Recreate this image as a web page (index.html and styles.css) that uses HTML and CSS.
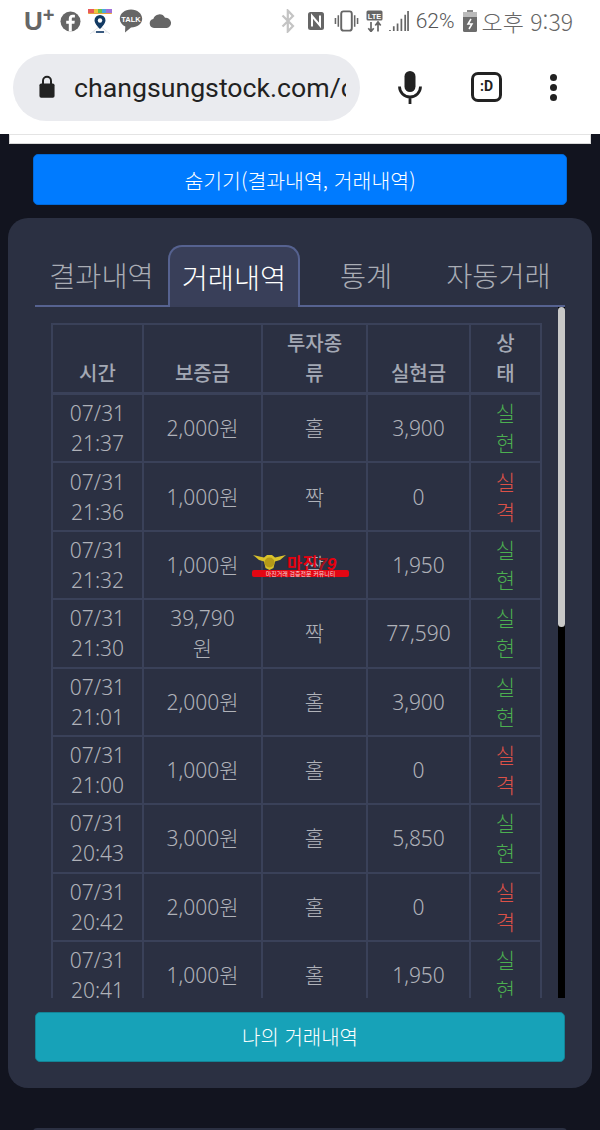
FILE: index.html
```html
<!DOCTYPE html>
<html lang="ko">
<head>
<meta charset="utf-8">
<title>거래내역</title>
<link rel="stylesheet" href="styles.css">
</head>
<body>
<div class="chrome">
  <div class="status">
    <div class="status-left">
      <span class="uplus">U<sup>+</sup></span>
      <svg class="ic" width="21" height="21" viewBox="0 0 21 21"><circle cx="10.5" cy="10.5" r="10" fill="#666"/><path d="M11.8 20.5v-7.7h2.6l.4-3h-3V8c0-.9.3-1.400 1.500-1.400h1.600V3.900c-.3 0-1.200-.1-2.300-.1-2.300 0-3.800 1.400-3.800 3.900v2.100H6.200v3h2.600v7.700z" fill="#fff"/></svg>
      <svg class="ic" width="26" height="26" viewBox="0 0 26 26"><path d="M3 26 13 18l10 8M6 24h14" fill="none" stroke="#dfe3e8" stroke-width="1"/><path d="M1 6 Q2 1 6 1H20Q24 1 25 6Z" fill="#e8a33c"/><rect x="1" y="1" width="6" height="4" fill="#e85a5a"/><rect x="7" y="1" width="4" height="4" fill="#f0c63c"/><rect x="11" y="1" width="4" height="4" fill="#6cc24a"/><rect x="15" y="1" width="4" height="4" fill="#4aa8e0"/><rect x="19" y="1" width="6" height="4" fill="#a070d8"/><path d="M13 7a5.500 5.500 0 0 0-5.500 5.500C7.500 16 13 21 13 21s5.500-5 5.500-8.500A5.500 5.500 0 0 0 13 7z" fill="#123a63"/><circle cx="13" cy="12.500" r="2.200" fill="#fff"/><rect x="9" y="23" width="8" height="2" fill="#3a5a80"/></svg>
      <svg class="ic" width="24" height="24" viewBox="0 0 24 24"><path d="M12 .5C5.700.5.800 4.500.800 9.800c0 3.400 2.200 6.200 5.500 7.800L6 23.500l6-5c6.300 0 11.200-3.600 11.200-8.700S18.300.5 12 .5z" fill="#666"/><text x="12" y="12.500" class="talk">TALK</text></svg>
      <svg class="ic" width="23" height="14" viewBox="0 0 23 14"><path d="M5 14a4.500 4.500 0 0 1-.7-8.900A6.300 6.300 0 0 1 16 3.800 5.200 5.200 0 0 1 18 14z" fill="#666"/></svg>
    </div>
    <div class="status-right">
      <svg class="ic bt" width="14" height="24" viewBox="0 0 14 24"><path d="M1.500 6.500 12 17l-5.200 5.500V1.500L12 7 1.500 17.500" fill="none" stroke="#c4c4c4" stroke-width="2.200"/></svg>
      <svg class="ic nfc" width="18" height="20" viewBox="0 0 18 20"><rect x="1" y="1" width="16" height="18" rx="2.500" fill="#666"/><path d="M5 15.500V5l8 9.500V4.500" fill="none" stroke="#fff" stroke-width="2"/></svg>
      <svg class="ic" width="25" height="22" viewBox="0 0 26 22"><rect x="7.500" y="1" width="11" height="20" rx="2.500" fill="none" stroke="#666" stroke-width="2"/><path d="M4.500 5v12M1.500 8v6M21.500 5v12M24.500 8v6" stroke="#666" stroke-width="1.600"/></svg>
      <svg class="ic" width="17" height="22" viewBox="0 0 17 22"><rect x=".5" y=".5" width="16" height="10" rx="1.500" fill="#666"/><text x="8.500" y="8.500" class="lte">LTE</text><path d="M5 12v9M2.300 18.300 5 21.500l2.700-3.200M12 21.500v-9M9.300 15.500 12 12l2.700 3.500" fill="none" stroke="#666" stroke-width="1.700"/></svg>
      <svg class="ic signal" width="20" height="21" viewBox="0 0 21 22"><path d="M1 21v-1M5 21v-5M9 21v-8M13 21V8M17 21V4M20 21V0" stroke="#666" stroke-width="1.800"/></svg>
      <span class="pct">62%</span>
      <svg class="ic batt" width="14" height="22" viewBox="0 0 14 22"><rect x="4" y="0" width="6" height="3" fill="#888"/><rect x="0" y="2" width="14" height="20" rx="1.500" fill="#6c6c6c"/><rect x="0" y="2" width="14" height="5" fill="#bbb"/><path d="M8 9 5 14h4l-3 5" fill="none" stroke="#fff" stroke-width="1.500"/></svg>
      <span class="clock">오후 9:39</span>
    </div>
  </div>
  <div class="urlbar">
    <div class="omni">
      <svg class="ic" width="18" height="24" viewBox="0 0 19 27"><path d="M5 10V6.500a4.500 4.500 0 0 1 9 0V10" fill="none" stroke="#222" stroke-width="2.200"/><rect x="1" y="9.500" width="17" height="16" rx="2" fill="#222"/></svg>
      <span class="url">changsungstock.com/c</span>
    </div>
    <svg class="mic ic" width="24" height="33" viewBox="0 0 24 33"><rect x="6.500" y="0" width="11" height="21" rx="5.500" fill="#222"/><path d="M1.500 15.500a10.500 10.500 0 0 0 21 0M12 26v7" fill="none" stroke="#222" stroke-width="2.800"/></svg>
    <div class="tabcount">:D</div>
    <div class="dots"><i></i><i></i><i></i></div>
  </div>
</div>

<main class="page">
  <div class="topcard"></div>
  <button class="btn btn-blue">숨기기(결과내역, 거래내역)</button>
  <section class="panel">
    <nav class="tabs">
      <span class="tab">결과내역</span>
      <span class="tab active">거래내역</span>
      <span class="tab stat">통계</span>
      <span class="tab auto">자동거래</span>
    </nav>
    <div class="scroll">
      <table class="trades">
        <thead>
          <tr><th class="c1">시간</th><th class="c2">보증금</th><th class="c3">투자종류</th><th class="c4">실현금</th><th class="c5">상태</th></tr>
        </thead>
        <tbody>
          <tr><td>07/31 21:37</td><td>2,000원</td><td>홀</td><td>3,900</td><td class="win">실현</td></tr>
          <tr><td>07/31 21:36</td><td>1,000원</td><td>짝</td><td>0</td><td class="lose">실격</td></tr>
          <tr><td>07/31 21:32</td><td>1,000원</td><td>짝</td><td>1,950</td><td class="win">실현</td></tr>
          <tr><td>07/31 21:30</td><td>39,790원</td><td>짝</td><td>77,590</td><td class="win">실현</td></tr>
          <tr><td>07/31 21:01</td><td>2,000원</td><td>홀</td><td>3,900</td><td class="win">실현</td></tr>
          <tr><td>07/31 21:00</td><td>1,000원</td><td>홀</td><td>0</td><td class="lose">실격</td></tr>
          <tr><td>07/31 20:43</td><td>3,000원</td><td>홀</td><td>5,850</td><td class="win">실현</td></tr>
          <tr><td>07/31 20:42</td><td>2,000원</td><td>홀</td><td>0</td><td class="lose">실격</td></tr>
          <tr><td>07/31 20:41</td><td>1,000원</td><td>홀</td><td>1,950</td><td class="win">실현</td></tr>
        </tbody>
      </table>
      <div class="scrollbar"><div class="thumb"></div></div>
    </div>
    <button class="btn btn-teal">나의 거래내역</button>
  </section>
  <div class="nextcard"></div>
  <div class="watermark">
    <svg width="33" height="16" viewBox="0 0 33 16"><path d="M0 1 11 3.500 14 1h5l3 2.500L33 1 27 6l-5 1.500L20.500 14 16.500 16 12.500 14 11 7.500 6 6z" fill="#d9c22a"/><circle cx="16.500" cy="8.500" r="5" fill="#b59a18"/></svg>
    <span class="wm-name">마진<em>7<b>9</b></em></span>
    <span class="wm-bar">마진거래 검증전문 커뮤니티</span>
  </div>
</main>
</body>
</html>
```

FILE: styles.css
```css
* { box-sizing: border-box; }
html, body { margin: 0; padding: 0; }
body {
  width: 600px;
  height: 1130px;
  overflow: hidden;
  background: #12141f;
  font-family: "Noto Sans", "Noto Sans CJK KR", sans-serif;
}
.ic { display: block; flex: none; }

.chrome { height: 134px; background: #fff; display: flex; flex-direction: column; }
.status {
  height: 42px;
  padding: 0 27px 0 24px;
  display: flex;
  justify-content: space-between;
  align-items: center;
  color: #666;
  flex: none;
}
.status-left { display: flex; align-items: center; gap: 6px; }
.status-right { display: flex; align-items: center; gap: 7px; }
.uplus { font: 700 26px/28px "Liberation Sans", sans-serif; color: #666; width: 30px; white-space: nowrap; }
.uplus sup { font-size: 20px; line-height: 0; vertical-align: 8px; }
.talk { font: 700 7.500px "Liberation Sans", sans-serif; fill: #fff; text-anchor: middle; }
.lte { font: 700 7.500px "Liberation Sans", sans-serif; fill: #fff; text-anchor: middle; }
.bt { margin-right: 5px; }
.nfc { margin-right: 2px; }
.signal { margin-left: -1px; }
.batt { margin-left: 1px; }
.pct { font: 300 21px/26px "Roboto", sans-serif; color: #555; }
.clock { font: 300 23px/26px "Noto Sans CJK KR", sans-serif; color: #666; margin-left: -2px; white-space: nowrap; }

.urlbar {
  flex: 1;
  display: flex;
  align-items: center;
  padding: 0 36px 2px 13px;
}
.omni {
  width: 347px;
  height: 67px;
  border-radius: 34px;
  background: #eaebef;
  display: flex;
  align-items: center;
  gap: 18px;
  padding-left: 25px;
  overflow: hidden;
}
.url {
  width: 272px;
  overflow: hidden;
  white-space: nowrap;
  font: 400 26.700px/34px "Roboto", sans-serif;
  color: #222;
  padding-top: 1px;
}
.mic { margin-left: 38px; }
.tabcount {
  margin-left: 49px;
  width: 31px;
  height: 30px;
  border: 3.500px solid #222;
  border-radius: 7px;
  font: 700 14px/23px "Roboto", sans-serif;
  color: #222;
  text-align: center;
}
.dots { margin-left: 48px; display: flex; flex-direction: column; gap: 3px; }
.dots i { display: block; width: 7px; height: 7px; border-radius: 50%; background: #222; }

.page { position: relative; height: 996px; padding: 0 8px; display: flex; flex-direction: column; }
.topcard {
  height: 10px;
  margin: 0 1px;
  background: #fff;
  border: 1px solid #d8d8d8;
  border-top-color: #e4e4e4;
  flex: none;
}
.btn {
  display: block;
  border-radius: 5px;
  color: #fff;
  font: 300 20px/30px "Noto Sans CJK KR", sans-serif;
  text-align: center;
  flex: none;
}
.btn-blue {
  margin: 10px 25px 0;
  height: 51px;
  width: 534px;
  background: #007bff;
  border: 1px solid #0069d9;
  font-size: 20.500px;
}
.panel {
  margin-top: 13px;
  height: 870px;
  flex: none;
  border-radius: 20px;
  background: #2b3042;
  padding: 27px 27px 0;
  display: flex;
  flex-direction: column;
}
.tabs {
  height: 62px;
  display: flex;
  border-bottom: 2px solid #566290;
  flex: none;
}
.tab {
  font: 300 28.400px/60px "Noto Sans CJK KR", sans-serif;
  color: #a9acb4;
  white-space: nowrap;
  text-align: center;
}
.tab:nth-child(1) { width: 133px; }
.active {
  width: 132px;
  height: 62px;
  color: #fff;
  background: #393f59;
  border: 2px solid #566290;
  border-bottom: 0;
  border-radius: 14px 14px 0 0;
}
.stat { width: 132px; }
.auto { width: 133px; }
.scroll {
  height: 691px;
  flex: none;
  overflow: hidden;
  position: relative;
  padding: 16px 24px 0 16px;
}
.trades {
  width: 490px;
  table-layout: fixed;
  border-collapse: collapse;
  border: 2px solid #3a4159;
  color: #b0b2b9;
  font: 300 21px/30px "Noto Sans", "Noto Sans CJK KR", sans-serif;
}
.c1 { width: 91px; }
.c2 { width: 119px; }
.c3 { width: 105px; }
.c4 { width: 103px; }
.c5 { width: 71px; }
.trades th, .trades td {
  border: 2px solid #3a4159;
  padding: 3.200px 12px;
  text-align: center;
  word-break: break-all;
}
.trades th {
  font-weight: 500;
  font-size: 20px;
  vertical-align: bottom;
  color: #a3a8b4;
  padding: 3.500px 15px;
  border-bottom-width: 3px;
}
.trades th.c5 { padding-left: 18px; padding-right: 18px; }
.trades td { vertical-align: middle; }
.trades td:nth-child(2) { padding-left: 19px; padding-right: 19px; }
.trades .win { color: #4caf50; }
.trades .lose { color: #dc5148; }
.trades td:last-child { padding-left: 18px; padding-right: 18px; }
.scrollbar {
  position: absolute;
  top: 0;
  bottom: 0;
  right: 0;
  width: 7px;
  background: #000;
}
.thumb { height: 320px; background: #c8c8c8; border-radius: 4px; }
.btn-teal {
  margin-top: 14px;
  height: 50px;
  width: 530px;
  background: #17a2b8;
  border: 1px solid #138496;
}
.nextcard {
  margin-top: 40px;
  height: 4px;
  background: #2b3042;
  border-radius: 8px 8px 0 0;
  margin-left: 25px;
  margin-right: 25px;
  flex: none;
}
.watermark {
  position: absolute;
  left: 252px;
  top: 420px;
  width: 97px;
  height: 23px;
}
.watermark svg { position: absolute; left: 1px; top: 0; }
.wm-name {
  position: absolute;
  left: 35px;
  top: -1px;
  font: 700 16.500px/20px "Noto Sans CJK KR", sans-serif;
  color: #e8000f;
  white-space: nowrap;
}
.wm-name em { font: italic 700 17px/20px "Liberation Sans", sans-serif; color: #a8101a; }
.wm-name b { color: #e8000f; }
.wm-bar {
  position: absolute;
  left: 0;
  bottom: 0;
  width: 97px;
  height: 7px;
  border-radius: 2px;
  background: #e30613;
  color: #f4d9d9;
  font: 400 6px/7px "Noto Sans CJK KR", sans-serif;
  text-align: center;
  white-space: nowrap;
}
```
